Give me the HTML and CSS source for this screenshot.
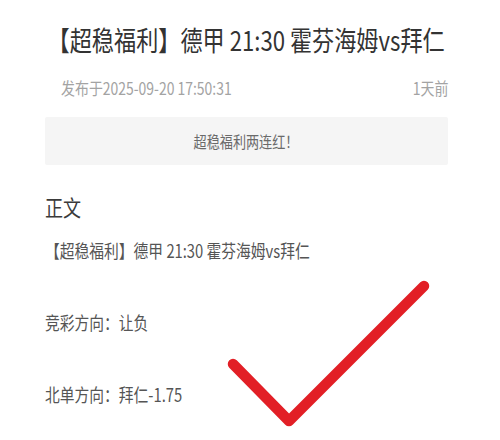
FILE: index.html
```html
<!DOCTYPE html>
<html lang="zh-CN">
<head>
<meta charset="utf-8">
<link rel="stylesheet" href="styles.css">
</head>
<body>
<div class="page">
  <h1 class="title"><span class="sx sx-c">【超稳福利】德甲 21:30 霍芬海姆vs拜仁</span></h1>
  <div class="meta">
    <span class="sx">发布于2025-09-20 17:50:31</span>
    <span class="sx sx-r">1天前</span>
  </div>
  <div class="notice"><span class="sx sx-c">超稳福利两连红！</span></div>
  <h2 class="section"><span class="sx">正文</span></h2>
  <p class="line first"><span class="sx">【超稳福利】德甲 21:30 霍芬海姆vs拜仁</span></p>
  <p class="line"><span class="sx">竞彩方向：让负</span></p>
  <p class="line"><span class="sx">北单方向：拜仁-1.75</span></p>
</div>
<svg class="check" width="500" height="440" viewBox="0 0 500 440">
  <polyline points="233,364 289,421 424,286" fill="none" stroke="#e21f26" stroke-width="10.5" stroke-linecap="round" stroke-linejoin="round"/>
</svg>
</body>
</html>
```
FILE: styles.css
```css
html, body {
  margin: 0;
  padding: 0;
  background: #ffffff;
}
body {
  position: relative;
  width: 500px;
  height: 440px;
  overflow: hidden;
  font-family: "Noto Sans CJK SC", "Noto Sans", sans-serif;
}
.page {
  width: 403px;
  margin-left: 45px;
  padding-top: 20px;
}
.sx {
  display: inline-block;
  white-space: nowrap;
  transform: scaleX(0.82);
  transform-origin: left center;
}
.sx-c { transform-origin: center center; }
.sx-r { transform-origin: right center; }
.title {
  display: flex;
  justify-content: center;
  margin: 0;
  font-size: 27px;
  font-weight: 400;
  line-height: 40px;
  color: #333333;
}
.meta {
  display: flex;
  justify-content: space-between;
  margin-top: 18px;
  padding-left: 16px;
  font-size: 17px;
  line-height: 20px;
  color: #a3a3a3;
}
.notice {
  display: flex;
  justify-content: center;
  align-items: center;
  margin-top: 19px;
  height: 48px;
  background: #f5f5f5;
  border-radius: 2px;
  font-size: 16px;
  color: #6a6a6a;
}
.section {
  margin: 26px 0 0;
  font-size: 22px;
  font-weight: 400;
  line-height: 30px;
  color: #3a3a3a;
}
.line {
  margin: 48px 0 0;
  font-size: 18px;
  line-height: 24px;
  color: #555555;
}
.line.first {
  margin-top: 17px;
}
.check {
  position: absolute;
  left: 0;
  top: 0;
  pointer-events: none;
}
```
